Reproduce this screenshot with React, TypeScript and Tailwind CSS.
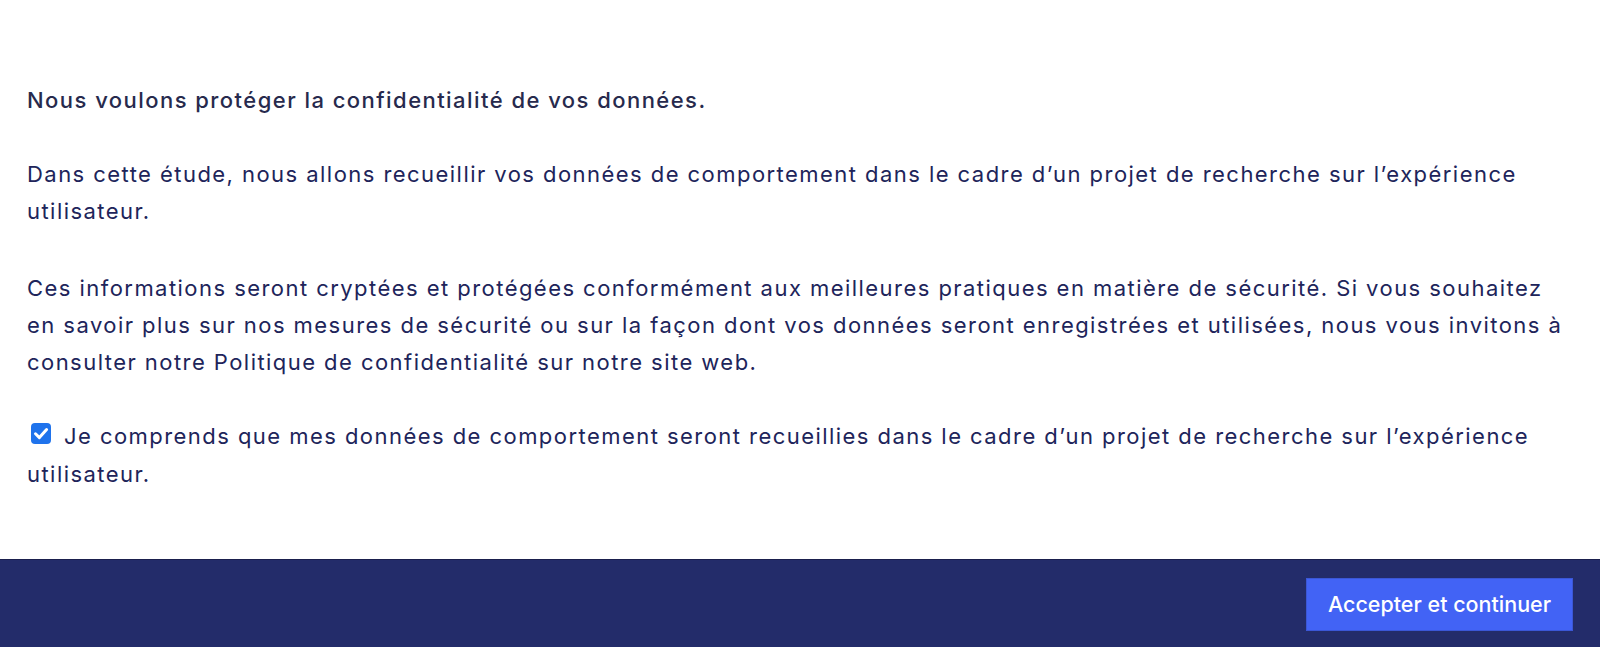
import React, { useState } from 'react';

const font = { fontFamily: 'Inter, "Noto Sans", sans-serif' };

const CheckBox = ({ checked, onToggle }: { checked: boolean; onToggle: () => void }) => (
  <span
    role="checkbox"
    aria-checked={checked}
    onClick={onToggle}
    className={`ml-[4px] mr-[13px] inline-block h-[21px] w-[20px] cursor-pointer rounded-[4px] align-baseline ${
      checked ? 'bg-[#1f73ec]' : 'border-2 border-[#767676] bg-white'
    }`}
  >
    {checked && (
      <svg viewBox="0 0 20 21" className="h-[21px] w-[20px]">
        <path
          d="M4.5 10.8 L8.4 14.6 L15.6 6.6"
          fill="none"
          stroke="#fff"
          strokeWidth="3"
          strokeLinecap="round"
          strokeLinejoin="round"
        />
      </svg>
    )}
  </span>
);

const App = () => {
  const [agreed, setAgreed] = useState(true);

  return (
    <div className="flex h-screen flex-col bg-white" style={font}>
      {/* Consent text */}
      <div className="flex-1 px-[27px] pt-[82px] text-[22px] leading-[37px] tracking-[1.45px] text-[#20245a]">
        <h1 className="font-medium text-[#272a4d]">
          Nous voulons protéger la confidentialité de vos données.
        </h1>
        <p className="mt-[37px]">
          Dans cette étude, nous allons recueillir vos données de comportement dans le cadre d’un projet
          de recherche sur l’expérience utilisateur.
        </p>
        <p className="mt-[40px]">
          Ces informations seront cryptées et protégées conformément aux meilleures pratiques en matière
          de sécurité. Si vous souhaitez en savoir plus sur nos mesures de sécurité ou sur la façon dont
          vos données seront enregistrées et utilisées, nous vous invitons à consulter notre Politique de
          confidentialité sur notre site web.
        </p>
        <p className="mt-[36px] leading-[38px]">
          <CheckBox checked={agreed} onToggle={() => setAgreed(!agreed)} />
          Je comprends que mes données de comportement seront recueillies dans le cadre d’un projet de
          recherche sur l’expérience utilisateur.
        </p>
      </div>

      {/* Footer */}
      <footer className="flex h-[88px] shrink-0 justify-end border-t border-[#1a1f4d] bg-[#232c6a] px-[27px] pt-[18px]">
        <button
          type="button"
          className="h-[53px] w-[267px] border border-[#3b57d6] bg-[#4263f5] text-[21.5px] font-medium text-white"
        >
          Accepter et continuer
        </button>
      </footer>
    </div>
  );
};

export default App;
